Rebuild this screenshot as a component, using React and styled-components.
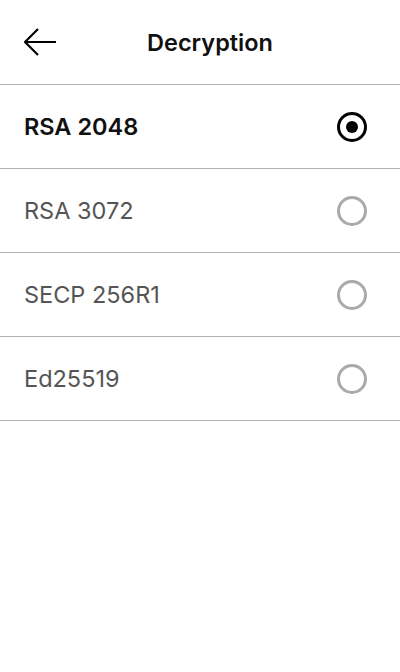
import React, { useState } from "react";
import styled, { createGlobalStyle } from "styled-components";

const Global = createGlobalStyle`
  html, body { margin: 0; padding: 0; background: #fff; }
  body { font-family: Inter, "Noto Sans", sans-serif; -webkit-font-smoothing: antialiased; }
`;

const Page = styled.div`
  width: 400px;
  min-height: 672px;
  background: #fff;
  display: flex;
  flex-direction: column;
`;

const Header = styled.header`
  height: 85px;
  box-sizing: border-box;
  display: grid;
  grid-template-columns: 56px 1fr 36px;
  align-items: center;
  padding: 0 24px;
  border-bottom: 1px solid #b3b3b3;
`;

const BackButton = styled.button`
  border: 0;
  background: none;
  padding: 0;
  width: 32px;
  height: 32px;
  display: flex;
  align-items: center;
  justify-content: center;
  cursor: pointer;
`;

const Title = styled.h1`
  margin: 0;
  text-align: center;
  font-size: 23.5px;
  font-weight: 600;
  color: #111;
`;

const List = styled.ul`
  list-style: none;
  margin: 0;
  padding: 0;
`;

const Row = styled.li`
  height: 84px;
  box-sizing: border-box;
  display: flex;
  align-items: center;
  justify-content: space-between;
  padding: 0 33px 0 24px;
  border-bottom: 1px solid #b3b3b3;
  cursor: pointer;
`;

const Label = styled.span`
  font-size: 23.5px;
  font-weight: ${(p) => (p.$active ? 600 : 400)};
  color: ${(p) => (p.$active ? "#111" : "#555")};
`;

const Radio = styled.span`
  width: 30px;
  height: 30px;
  box-sizing: border-box;
  border-radius: 50%;
  border: 3.5px solid ${(p) => (p.$active ? "#000" : "#aaa")};
  display: flex;
  align-items: center;
  justify-content: center;
  &::after {
    content: "";
    width: 12px;
    height: 12px;
    border-radius: 50%;
    background: #000;
    display: ${(p) => (p.$active ? "block" : "none")};
  }
`;

const options = ["RSA 2048", "RSA 3072", "SECP 256R1", "Ed25519"];

export default function App() {
  const [selected, setSelected] = useState(0);
  return (
    <Page>
      <Global />
      <Header>
        <BackButton aria-label="Back">
          <svg width="32" height="28" viewBox="0 0 32 28" fill="none">
            <path d="M32 14H2M14 1L1 14l13 13" stroke="#000" strokeWidth="2.2" />
          </svg>
        </BackButton>
        <Title>Decryption</Title>
        <span />
      </Header>
      <List>
        {options.map((o, i) => (
          <Row key={o} onClick={() => setSelected(i)}>
            <Label $active={i === selected}>{o}</Label>
            <Radio $active={i === selected} />
          </Row>
        ))}
      </List>
    </Page>
  );
}
